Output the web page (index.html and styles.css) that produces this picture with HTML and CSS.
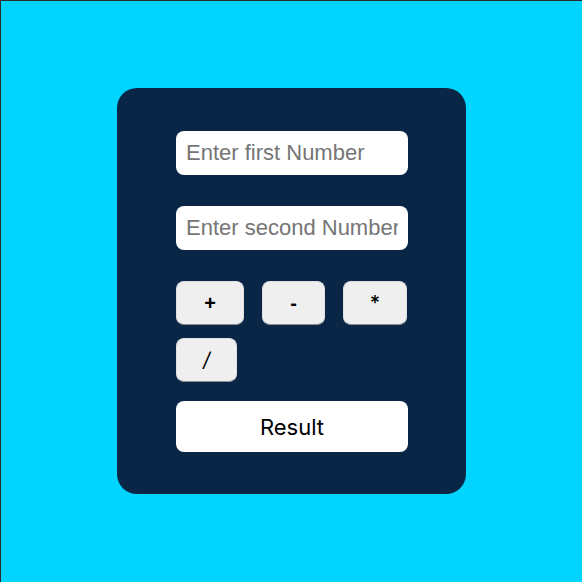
FILE: index.html
```html
<!DOCTYPE html>
<html lang="en">
<head>
<meta charset="utf-8">
<title>Calculator</title>
<link rel="stylesheet" href="styles.css">
</head>
<body>
<main class="card">
  <input class="field" type="text" placeholder="Enter first Number">
  <input class="field" type="text" placeholder="Enter second Number">
  <div class="ops">
    <button class="op op-plus">+</button>
    <button class="op op-minus">-</button>
    <button class="op op-mul">*</button>
    <button class="op op-div">/</button>
  </div>
  <button class="result">Result</button>
</main>
</body>
</html>
```
FILE: styles.css
```css
* { box-sizing: border-box; }
html, body { margin: 0; padding: 0; }
body {
  min-height: 100vh;
  background: #00d4ff;
  box-shadow: inset 0 1px 0 #2b2b2b;
  border-left: 1px solid #2b2b2b;
  display: flex;
  align-items: center;
  justify-content: center;
  font-family: "Liberation Sans", Arial, sans-serif;
}
.card {
  width: 349px;
  background: #0a2647;
  border-radius: 20px;
  padding: 43px 58px 42px 59px;
  display: flex;
  flex-direction: column;
}
.field {
  width: 232px;
  height: 44px;
  border: none;
  border-radius: 8px;
  background: #fff;
  padding: 0 10px;
  font-family: "Liberation Sans", Arial, sans-serif;
  font-size: 22px;
  color: #222;
  margin-bottom: 31px;
  outline: none;
}
.field::placeholder { color: #757575; }
.ops {
  display: flex;
  flex-wrap: wrap;
  column-gap: 18px;
  row-gap: 13px;
  margin-bottom: 19px;
}
.op {
  height: 44px;
  background: #efefef;
  border: 1px solid #e0e0e4;
  border-bottom-color: #8a8f99;
  border-radius: 8px;
  font-family: "Liberation Sans", Arial, sans-serif;
  font-size: 20px;
  color: #000;
  padding: 0;
  cursor: pointer;
}
.op-plus { width: 68px; font-weight: 700; }
.op-minus { width: 63px; font-weight: 700; }
.op-mul { width: 64px; font-family: "Inter", sans-serif; font-weight: 500; }
.op-div { width: 61px; font-family: "Inter", sans-serif; font-style: italic; }
.result {
  width: 232px;
  height: 51px;
  background: #fff;
  border: none;
  border-radius: 8px;
  font-family: "Inter", "Open Sans", sans-serif;
  font-size: 22px;
  color: #000;
  cursor: pointer;
}
```
